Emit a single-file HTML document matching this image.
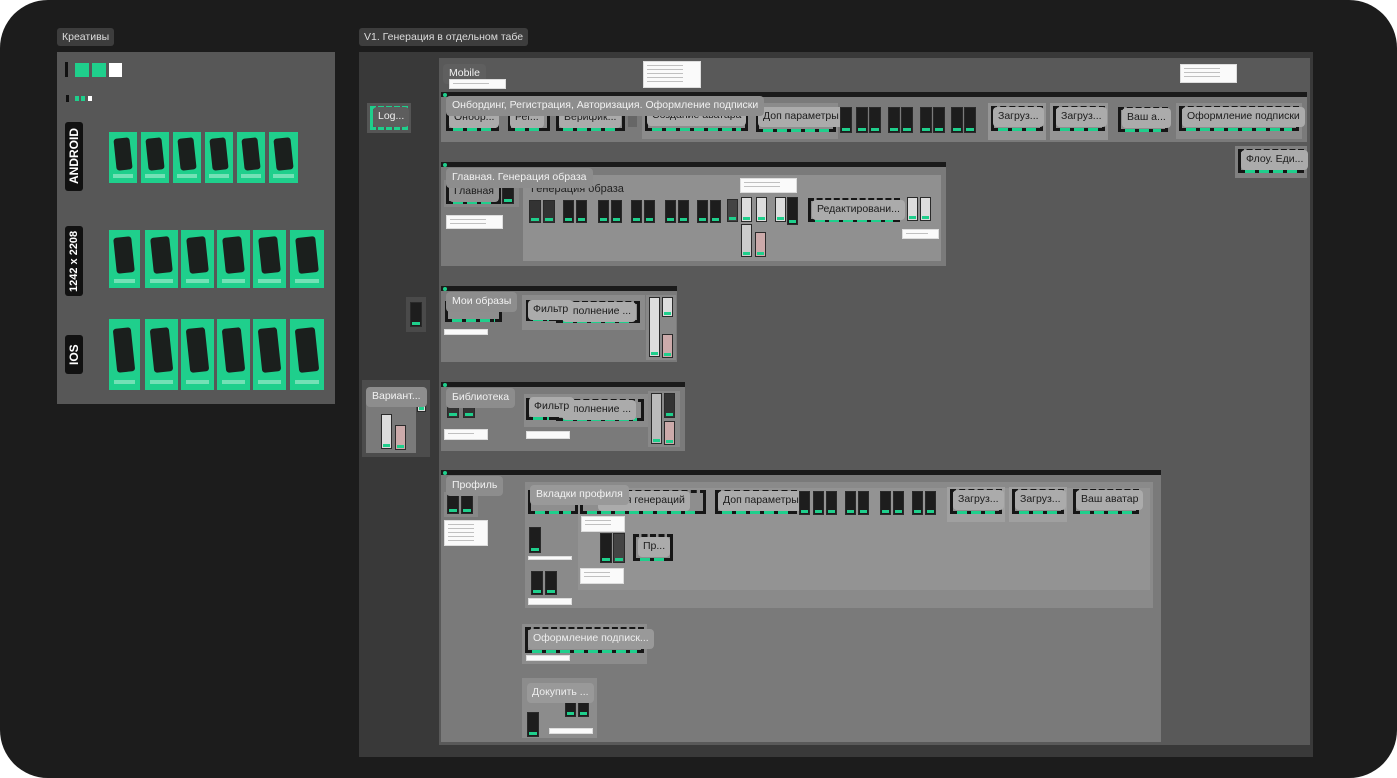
<!DOCTYPE html>
<html><head><meta charset="utf-8">
<style>
*{margin:0;padding:0;box-sizing:border-box}
body{width:1397px;height:778px;background:#fff;overflow:hidden;font-family:"Liberation Sans","DejaVu Sans",sans-serif}
#c{position:absolute;left:0;top:0;width:1397px;height:778px;background:#1c1c1c;border-radius:48px;overflow:hidden}
.a{position:absolute}
.tag{position:absolute;height:18px;background:#3d3d3d;color:#ddd;font-size:10.5px;line-height:18px;padding:0 5px;border-radius:3px;white-space:nowrap}
.gr{position:absolute;background:#1fcf8c}
.gr i{position:absolute;left:20%;top:12%;width:58%;height:62%;background:#1b1f1d;border-radius:3px;transform:rotate(-6deg)}
.gr b{position:absolute;left:15%;bottom:9%;width:70%;height:4px;background:#c8f3e0;opacity:.5}
.vl{position:absolute;background:#111;color:#fff;font-weight:bold;border-radius:3px;writing-mode:vertical-rl;transform:rotate(180deg);text-align:center;font-size:12px;line-height:18px;width:18px}
.sec{position:absolute;background:#7a7a7a}
.sec .bar{position:absolute;left:0;top:0;right:0;height:5px;background:#1a1a1a}
.sec .bar:before{content:"";position:absolute;left:2px;top:1px;width:4px;height:4px;background:#1fcf8c;border-radius:50%}
.st{position:absolute;background:#8d8d8d;color:#f2f2f2;font-size:10.5px;line-height:19px;height:20px;padding:0 6px;border-radius:4px;white-space:nowrap}
.g{position:absolute;background:#8b8b8b}
.bx{position:absolute;border:3px solid #161616;border-top-style:dashed;background:#8e8e8e}
.bx:after{content:"";position:absolute;left:4px;right:4px;bottom:-3px;height:3px;background:repeating-linear-gradient(90deg,#1fcf8c 0 10px,#161616 10px 14px)}
.pl{position:absolute;background:#ababab;color:#1b1b1b;font-size:10.5px;line-height:19px;height:20px;padding:0 5px;border-radius:4px;white-space:nowrap}
.ph{position:absolute;background:#1d1d1d;border:1px solid #2a2a2a}
.ph:after{content:"";position:absolute;left:1px;right:1px;bottom:1px;height:3px;background:#1fcf8c}
.w{position:absolute;background:#fafafa;border:1px solid #ddd}
.w:before{content:"";position:absolute;left:3px;top:3px;right:30%;bottom:3px;background:repeating-linear-gradient(180deg,#9a9a9a 0 1px,transparent 1px 4px);opacity:.6}
</style></head><body><div id="c">

<div class="tag" style="left:57px;top:28px">Креативы</div>
<div class="a" style="left:57px;top:52px;width:278px;height:352px;background:#575757"></div>
<div class="a" style="left:65px;top:62px;width:3px;height:15px;background:#111"></div>
<div class="gr" style="left:75px;top:63px;width:14px;height:14px"></div>
<div class="gr" style="left:92px;top:63px;width:14px;height:14px"></div>
<div class="a" style="left:109px;top:63px;width:13px;height:14px;background:#fff"></div>
<div class="a" style="left:66px;top:95px;width:3px;height:7px;background:#111"></div>
<div class="gr" style="left:75px;top:96px;width:4px;height:5px"></div>
<div class="gr" style="left:81px;top:96px;width:4px;height:5px"></div>
<div class="a" style="left:88px;top:96px;width:4px;height:5px;background:#fff"></div>
<div class="vl" style="left:65px;top:122px;height:69px">ANDROID</div>
<div class="vl" style="left:65px;top:226px;height:70px;font-size:11px">1242 x 2208</div>
<div class="vl" style="left:65px;top:335px;height:39px">IOS</div>

<div class="gr" style="left:109px;top:132px;width:28px;height:51px"><i></i><b></b></div>
<div class="gr" style="left:141px;top:132px;width:28px;height:51px"><i></i><b></b></div>
<div class="gr" style="left:173px;top:132px;width:28px;height:51px"><i></i><b></b></div>
<div class="gr" style="left:205px;top:132px;width:28px;height:51px"><i></i><b></b></div>
<div class="gr" style="left:237px;top:132px;width:28px;height:51px"><i></i><b></b></div>
<div class="gr" style="left:269px;top:132px;width:29px;height:51px"><i></i><b></b></div>

<div class="gr" style="left:109px;top:230px;width:31px;height:58px"><i></i><b></b></div>
<div class="gr" style="left:145px;top:230px;width:33px;height:58px"><i></i><b></b></div>
<div class="gr" style="left:181px;top:230px;width:33px;height:58px"><i></i><b></b></div>
<div class="gr" style="left:217px;top:230px;width:33px;height:58px"><i></i><b></b></div>
<div class="gr" style="left:253px;top:230px;width:33px;height:58px"><i></i><b></b></div>
<div class="gr" style="left:290px;top:230px;width:34px;height:58px"><i></i><b></b></div>

<div class="gr" style="left:109px;top:319px;width:31px;height:71px"><i></i><b></b></div>
<div class="gr" style="left:145px;top:319px;width:33px;height:71px"><i></i><b></b></div>
<div class="gr" style="left:181px;top:319px;width:33px;height:71px"><i></i><b></b></div>
<div class="gr" style="left:217px;top:319px;width:33px;height:71px"><i></i><b></b></div>
<div class="gr" style="left:253px;top:319px;width:33px;height:71px"><i></i><b></b></div>
<div class="gr" style="left:290px;top:319px;width:34px;height:71px"><i></i><b></b></div>

<div class="tag" style="left:359px;top:28px">V1. Генерация в отдельном табе</div>
<div class="a" style="left:359px;top:52px;width:954px;height:705px;background:#393939"></div>
<div class="a" style="left:439px;top:58px;width:871px;height:687px;background:#595959"></div>

<div class="a" style="left:367px;top:103px;width:44px;height:30px;background:#555"></div>
<div class="a" style="left:370px;top:106px;width:38px;height:24px;border:3px solid #1fcf8c;border-top-style:dashed;border-bottom-style:dashed"></div>
<div class="pl" style="left:373px;top:107px;background:#5d5d5d;color:#eee">Log...</div>

<div class="st" style="left:443px;top:64px;background:#5f5f5f">Mobile</div>
<div class="w" style="left:449px;top:79px;width:57px;height:10px"></div>
<div class="w" style="left:643px;top:61px;width:58px;height:27px"></div>
<div class="w" style="left:1180px;top:64px;width:57px;height:19px"></div>

<div class="sec" style="left:441px;top:92px;width:866px;height:50px"><div class="bar"></div></div>
<div class="bx" style="left:446px;top:107px;width:53px;height:24px"></div><div class="pl" style="left:449px;top:108px">Онбор...</div>
<div class="bx" style="left:508px;top:107px;width:42px;height:24px"></div><div class="pl" style="left:510px;top:108px">Рег...</div>
<div class="bx" style="left:556px;top:107px;width:69px;height:24px"></div><div class="pl" style="left:559px;top:108px">Верифик...</div>
<div class="a" style="left:628px;top:115px;width:9px;height:12px;background:#666"></div>
<div class="g" style="left:642px;top:103px;width:110px;height:36px"></div>
<div class="bx" style="left:645px;top:105px;width:103px;height:26px"></div><div class="pl" style="left:647px;top:106px">Создание аватара</div>
<div class="g" style="left:752px;top:103px;width:86px;height:36px"></div>
<div class="bx" style="left:756px;top:107px;width:80px;height:25px"></div><div class="pl" style="left:758px;top:107px">Доп параметры</div>
<div class="ph" style="left:840px;top:107px;width:12px;height:26px"></div>
<div class="ph" style="left:856px;top:107px;width:12px;height:26px"></div><div class="ph" style="left:869px;top:107px;width:12px;height:26px"></div>
<div class="ph" style="left:888px;top:107px;width:12px;height:26px"></div><div class="ph" style="left:901px;top:107px;width:12px;height:26px"></div>
<div class="ph" style="left:920px;top:107px;width:12px;height:26px"></div><div class="ph" style="left:933px;top:107px;width:12px;height:26px"></div>
<div class="ph" style="left:951px;top:107px;width:12px;height:26px"></div><div class="ph" style="left:964px;top:107px;width:12px;height:26px"></div>
<div class="g" style="left:988px;top:103px;width:58px;height:37px;background:#959595"></div>
<div class="bx" style="left:991px;top:106px;width:52px;height:25px"></div><div class="pl" style="left:993px;top:107px">Загруз...</div>
<div class="g" style="left:1050px;top:103px;width:58px;height:37px;background:#959595"></div>
<div class="bx" style="left:1053px;top:106px;width:52px;height:25px"></div><div class="pl" style="left:1056px;top:107px">Загруз...</div>
<div class="bx" style="left:1118px;top:107px;width:50px;height:25px"></div><div class="pl" style="left:1122px;top:108px">Ваш а...</div>
<div class="g" style="left:1176px;top:103px;width:126px;height:36px"></div>
<div class="bx" style="left:1179px;top:106px;width:120px;height:25px"></div><div class="pl" style="left:1182px;top:107px">Оформление подписки</div>
<div class="st" style="left:446px;top:96px">Онбординг, Регистрация, Авторизация. Оформление подписки</div>

<div class="g" style="left:1235px;top:146px;width:72px;height:32px;background:#808080"></div>
<div class="bx" style="left:1238px;top:149px;width:66px;height:24px"></div><div class="pl" style="left:1241px;top:150px">Флоу. Еди...</div>

<div class="sec" style="left:441px;top:162px;width:505px;height:104px"><div class="bar"></div></div>
<div class="g" style="left:444px;top:180px;width:75px;height:27px;background:#858585"></div>
<div class="bx" style="left:446px;top:182px;width:55px;height:22px"></div><div class="pl" style="left:449px;top:182px;background:#929292">Главная</div>
<div class="ph" style="left:502px;top:184px;width:12px;height:20px"></div>
<div class="w" style="left:446px;top:215px;width:57px;height:14px"></div>
<div class="g" style="left:523px;top:175px;width:418px;height:86px;background:#909090"></div>
<div class="a" style="left:531px;top:183px;font-size:11px;color:#222">Генерация образа</div>
<div class="ph" style="left:529px;top:200px;width:12px;height:23px;background:#333"></div><div class="ph" style="left:543px;top:200px;width:12px;height:23px;background:#333"></div>
<div class="ph" style="left:563px;top:200px;width:11px;height:23px"></div><div class="ph" style="left:576px;top:200px;width:11px;height:23px"></div>
<div class="ph" style="left:598px;top:200px;width:11px;height:23px"></div><div class="ph" style="left:611px;top:200px;width:11px;height:23px"></div>
<div class="ph" style="left:631px;top:200px;width:11px;height:23px"></div><div class="ph" style="left:644px;top:200px;width:11px;height:23px"></div>
<div class="ph" style="left:665px;top:200px;width:11px;height:23px"></div><div class="ph" style="left:678px;top:200px;width:11px;height:23px"></div>
<div class="ph" style="left:697px;top:200px;width:11px;height:23px"></div><div class="ph" style="left:710px;top:200px;width:11px;height:23px"></div>
<div class="ph" style="left:727px;top:199px;width:11px;height:23px;background:#444"></div>
<div class="ph" style="left:741px;top:197px;width:11px;height:25px;background:#ddd"></div><div class="ph" style="left:756px;top:197px;width:11px;height:25px;background:#ddd"></div>
<div class="ph" style="left:741px;top:224px;width:11px;height:33px;background:#ccc"></div><div class="ph" style="left:755px;top:232px;width:11px;height:25px;background:#caa"></div>
<div class="w" style="left:740px;top:178px;width:57px;height:15px"></div>
<div class="ph" style="left:775px;top:197px;width:11px;height:25px;background:#ddd"></div><div class="ph" style="left:787px;top:197px;width:11px;height:28px"></div>
<div class="bx" style="left:808px;top:198px;width:92px;height:24px"></div><div class="pl" style="left:812px;top:200px">Редактировани...</div>
<div class="ph" style="left:907px;top:197px;width:11px;height:24px;background:#ddd"></div><div class="ph" style="left:920px;top:197px;width:11px;height:24px;background:#ddd"></div>
<div class="w" style="left:902px;top:229px;width:37px;height:10px"></div>
<div class="st" style="left:446px;top:168px">Главная. Генерация образа</div>

<div class="a" style="left:406px;top:297px;width:20px;height:35px;background:#4a4a4a"></div>
<div class="ph" style="left:410px;top:302px;width:12px;height:25px"></div>

<div class="a" style="left:362px;top:380px;width:68px;height:77px;background:#4c4c4c"></div>
<div class="a" style="left:366px;top:397px;width:50px;height:56px;background:#7a7a7a"></div>
<div class="ph" style="left:381px;top:414px;width:11px;height:35px;background:#ddd"></div>
<div class="ph" style="left:395px;top:425px;width:11px;height:25px;background:#caa"></div>
<div class="ph" style="left:417px;top:398px;width:9px;height:14px;background:#ddd"></div>
<div class="st" style="left:366px;top:387px">Вариант...</div>

<div class="sec" style="left:441px;top:286px;width:236px;height:76px"><div class="bar"></div></div>
<div class="bx" style="left:445px;top:301px;width:57px;height:21px"></div>
<div class="w" style="left:444px;top:329px;width:44px;height:6px"></div>
<div class="g" style="left:522px;top:295px;width:123px;height:35px"></div>
<div class="bx" style="left:526px;top:300px;width:30px;height:21px"></div>
<div class="bx" style="left:556px;top:301px;width:84px;height:22px"></div><div class="pl" style="left:562px;top:302px">аполнение ...</div>
<div class="pl" style="left:528px;top:300px">Фильтр</div>
<div class="a" style="left:646px;top:295px;width:30px;height:65px;background:#888"></div>
<div class="ph" style="left:649px;top:297px;width:11px;height:60px;background:#ddd"></div><div class="ph" style="left:662px;top:297px;width:11px;height:20px;background:#ddd"></div>
<div class="ph" style="left:662px;top:334px;width:11px;height:24px;background:#caa"></div>
<div class="st" style="left:446px;top:292px">Мои образы</div>

<div class="sec" style="left:441px;top:382px;width:244px;height:69px"><div class="bar"></div></div>
<div class="ph" style="left:447px;top:406px;width:12px;height:12px;background:#333"></div><div class="ph" style="left:463px;top:406px;width:12px;height:12px;background:#333"></div>
<div class="w" style="left:444px;top:429px;width:44px;height:11px"></div>
<div class="w" style="left:526px;top:431px;width:44px;height:8px"></div>
<div class="g" style="left:524px;top:394px;width:124px;height:33px"></div>
<div class="bx" style="left:526px;top:398px;width:30px;height:22px"></div>
<div class="bx" style="left:556px;top:399px;width:88px;height:22px"></div><div class="pl" style="left:562px;top:400px">аполнение ...</div>
<div class="pl" style="left:529px;top:397px">Фильтр</div>
<div class="a" style="left:648px;top:391px;width:32px;height:56px;background:#888"></div>
<div class="ph" style="left:651px;top:393px;width:11px;height:51px;background:#bbb"></div><div class="ph" style="left:664px;top:393px;width:11px;height:25px;background:#333"></div>
<div class="ph" style="left:664px;top:421px;width:11px;height:24px;background:#caa"></div>
<div class="st" style="left:446px;top:388px">Библиотека</div>

<div class="sec" style="left:441px;top:470px;width:720px;height:272px"><div class="bar"></div></div>
<div class="g" style="left:444px;top:492px;width:34px;height:25px;background:#888"></div>
<div class="ph" style="left:447px;top:494px;width:12px;height:20px"></div><div class="ph" style="left:461px;top:494px;width:12px;height:20px"></div>
<div class="w" style="left:444px;top:520px;width:44px;height:26px"></div>
<div class="g" style="left:525px;top:482px;width:628px;height:126px;background:#8a8a8a"></div>
<div class="g" style="left:578px;top:488px;width:572px;height:102px;background:#939393"></div>
<div class="bx" style="left:528px;top:490px;width:50px;height:24px"></div>
<div class="bx" style="left:580px;top:490px;width:126px;height:24px"></div><div class="pl" style="left:598px;top:491px">ы для генераций</div>
<div class="bx" style="left:715px;top:490px;width:82px;height:24px"></div><div class="pl" style="left:718px;top:491px">Доп параметры</div>
<div class="ph" style="left:799px;top:491px;width:11px;height:24px"></div>
<div class="ph" style="left:813px;top:491px;width:11px;height:24px"></div><div class="ph" style="left:826px;top:491px;width:11px;height:24px"></div>
<div class="ph" style="left:845px;top:491px;width:11px;height:24px"></div><div class="ph" style="left:858px;top:491px;width:11px;height:24px"></div>
<div class="ph" style="left:880px;top:491px;width:11px;height:24px"></div><div class="ph" style="left:893px;top:491px;width:11px;height:24px"></div>
<div class="ph" style="left:912px;top:491px;width:11px;height:24px"></div><div class="ph" style="left:925px;top:491px;width:11px;height:24px"></div>
<div class="g" style="left:947px;top:487px;width:58px;height:35px;background:#a0a0a0"></div>
<div class="bx" style="left:950px;top:489px;width:52px;height:25px"></div><div class="pl" style="left:953px;top:490px">Загруз...</div>
<div class="g" style="left:1009px;top:487px;width:58px;height:35px;background:#a0a0a0"></div>
<div class="bx" style="left:1012px;top:489px;width:52px;height:25px"></div><div class="pl" style="left:1015px;top:490px">Загруз...</div>
<div class="bx" style="left:1073px;top:489px;width:66px;height:25px"></div><div class="pl" style="left:1076px;top:490px">Ваш аватар</div>
<div class="w" style="left:581px;top:516px;width:44px;height:16px"></div>
<div class="ph" style="left:529px;top:527px;width:12px;height:26px"></div>
<div class="w" style="left:528px;top:556px;width:44px;height:4px"></div>
<div class="ph" style="left:531px;top:571px;width:12px;height:24px"></div><div class="ph" style="left:545px;top:571px;width:12px;height:24px"></div>
<div class="w" style="left:528px;top:598px;width:44px;height:7px"></div>
<div class="ph" style="left:600px;top:533px;width:12px;height:30px"></div><div class="ph" style="left:613px;top:533px;width:12px;height:30px;background:#444"></div>
<div class="w" style="left:580px;top:568px;width:44px;height:16px"></div>
<div class="bx" style="left:633px;top:534px;width:40px;height:27px"></div><div class="pl" style="left:638px;top:537px">Пр...</div>
<div class="st" style="left:530px;top:485px;background:#999">Вкладки профиля</div>
<div class="g" style="left:522px;top:624px;width:125px;height:40px;background:#8c8c8c"></div>
<div class="bx" style="left:525px;top:627px;width:119px;height:26px"></div><div class="pl" style="left:528px;top:629px;color:#eee;background:#999">Оформление подписк...</div>
<div class="w" style="left:526px;top:655px;width:44px;height:6px"></div>
<div class="g" style="left:522px;top:678px;width:75px;height:60px;background:#8c8c8c"></div>
<div class="ph" style="left:527px;top:712px;width:12px;height:25px"></div>
<div class="ph" style="left:565px;top:702px;width:11px;height:15px"></div><div class="ph" style="left:578px;top:702px;width:11px;height:15px"></div>
<div class="w" style="left:549px;top:728px;width:44px;height:6px"></div>
<div class="pl" style="left:527px;top:683px;color:#eee;background:#999">Докупить ...</div>
<div class="st" style="left:446px;top:476px">Профиль</div>

</div></body></html>
